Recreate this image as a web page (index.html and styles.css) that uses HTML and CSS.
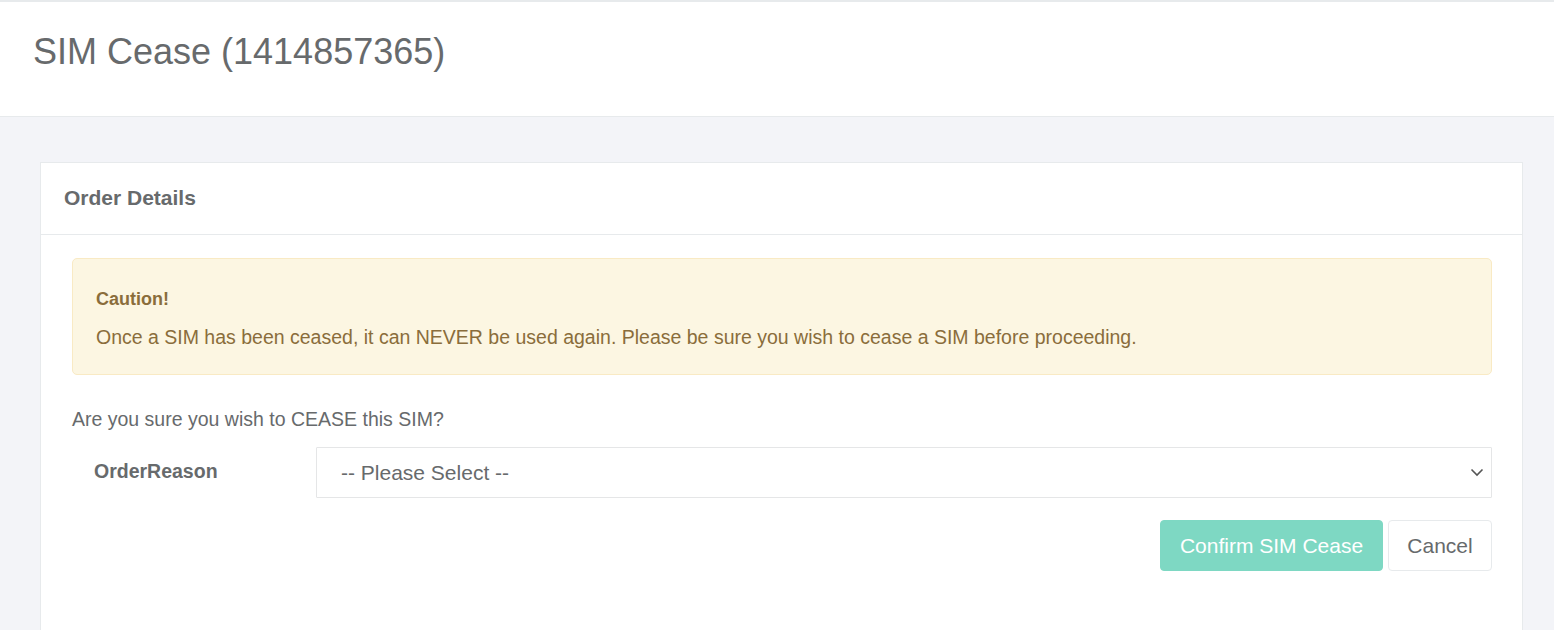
FILE: index.html
```html
<!DOCTYPE html>
<html>
<head>
<meta charset="utf-8">
<title>SIM Cease</title>
<link rel="stylesheet" href="styles.css">
</head>
<body>
<header class="page-heading">
  <h1 class="page-title">SIM Cease (1414857365)</h1>
</header>
<main class="wrapper">
  <section class="ibox">
    <div class="ibox-title">
      <h5>Order Details</h5>
    </div>
    <div class="ibox-content">
      <div class="alert">
        <strong class="alert-heading">Caution!</strong>
        <p class="alert-text">Once a SIM has been ceased, it can NEVER be used again. Please be sure you wish to cease a SIM before proceeding.</p>
      </div>
      <p class="question">Are you sure you wish to CEASE this SIM?</p>
      <div class="form-row">
        <label class="form-label" for="reason">OrderReason</label>
        <div class="select-wrap">
          <select id="reason" class="form-select">
            <option>-- Please Select --</option>
          </select>
          <svg class="chevron" width="14" height="9" viewBox="0 0 14 9"><path d="M1.5 1.5 L7 7 L12.5 1.5" fill="none" stroke="#555" stroke-width="1.6"/></svg>
        </div>
      </div>
      <div class="actions">
        <button class="btn btn-primary" disabled>Confirm SIM Cease</button>
        <button class="btn btn-white">Cancel</button>
      </div>
    </div>
  </section>
</main>
</body>
</html>
```
FILE: styles.css
```css
html, body {
  margin: 0;
  padding: 0;
}
body {
  font-family: "Liberation Sans", Arial, sans-serif;
  background: #f3f4f8;
  color: #676a6c;
  font-size: 19.5px;
  line-height: 1.43;
}
.page-heading {
  background: #fff;
  border-top: 2px solid #e7eaec;
  border-bottom: 1px solid #e7eaec;
  padding: 30px 33px 44px;
}
.page-title {
  margin: 0;
  font-size: 36px;
  font-weight: 400;
  line-height: 1.1;
  color: #676a6c;
}
.wrapper {
  padding: 45px 31px 0 40px;
}
.ibox {
  background: #fff;
  border: 1px solid #e7eaec;
}
.ibox-title {
  height: 71px;
  border-bottom: 1px solid #e7eaec;
  padding: 0 23px;
  display: flex;
  align-items: center;
}
.ibox-title h5 {
  margin: 0;
  font-size: 21px;
  font-weight: 700;
  color: #676a6c;
}
.ibox-content {
  padding: 23px 30px 80px 31px;
}
.alert {
  background: #fcf6e2;
  border: 1px solid #f9eac4;
  border-radius: 5px;
  padding: 28px 23px 23px;
  color: #8a6d3b;
}
.alert-heading {
  display: block;
  font-size: 18px;
  font-weight: 700;
  line-height: 25.7px;
}
.alert-text {
  margin: 11px 0 0;
  line-height: 28px;
}
.question {
  margin: 30px 0 0;
  line-height: 28px;
}
.form-row {
  margin-top: 14px;
  display: flex;
  align-items: center;
}
.form-label {
  width: 244px;
  box-sizing: border-box;
  padding-left: 22px;
  margin-bottom: 2px;
  font-weight: 700;
  color: #676a6c;
  flex: none;
}
.select-wrap {
  position: relative;
  flex: 1;
}
.form-select {
  display: block;
  width: 100%;
  height: 51px;
  box-sizing: border-box;
  border: 1px solid #e5e6e7;
  border-radius: 1px;
  background: #fff;
  padding: 0 24px;
  font-family: "Liberation Sans", Arial, sans-serif;
  font-size: 21px;
  color: #676a6c;
  appearance: none;
  -webkit-appearance: none;
}
.chevron {
  position: absolute;
  right: 8px;
  top: 21px;
  pointer-events: none;
}
.actions {
  margin-top: 22px;
  display: flex;
  justify-content: flex-end;
  gap: 5px;
}
.btn {
  height: 51px;
  box-sizing: border-box;
  border-radius: 4px;
  font-family: "Liberation Sans", Arial, sans-serif;
  font-size: 21px;
  padding: 0;
  white-space: nowrap;
  cursor: pointer;
}
.btn-primary {
  width: 223px;
  background: #7ed8c3;
  border: 1px solid #7ed8c3;
  color: #fff;
}
.btn-white {
  width: 104px;
  background: #fff;
  border: 1px solid #e7eaec;
  color: #676a6c;
}
```
